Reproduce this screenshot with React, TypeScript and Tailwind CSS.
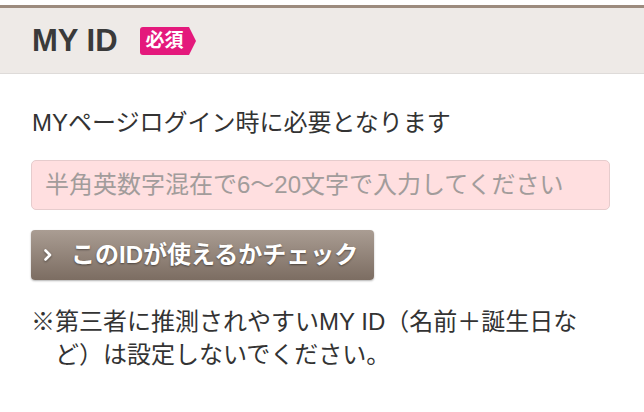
import * as React from "react";

const font = "font-['Liberation_Sans','Noto_Sans_CJK_JP',sans-serif]";

function RequiredBadge() {
  return (
    <span className="ml-[22px] flex items-center">
      <span className="flex h-[28px] items-center rounded-l-[3px] bg-[#e4197c] pl-[6px] pr-[5px] text-[19px] font-bold leading-none text-white">
        必須
      </span>
      <span className="h-0 w-0 border-y-[14px] border-l-[7px] border-y-transparent border-l-[#e4197c]" />
    </span>
  );
}

export default function App() {
  return (
    <div className={`min-h-[412px] w-full bg-white pt-[5px] text-[#333] ${font}`}>
      {/* section header */}
      <div className="flex h-[69px] items-center border-t-[3px] border-b border-t-[#9c8b7e] border-b-[#dedbd9] bg-[#eeeae7] pl-[32px]">
        <h2 className="text-[31px] font-bold leading-none text-[#3a3a3a]">MY ID</h2>
        <RequiredBadge />
      </div>

      <div className="px-[31px] pt-[32px]">
        <p className="pl-px text-[24px] leading-[34px]">MYページログイン時に必要となります</p>

        <input
          type="text"
          placeholder="半角英数字混在で6〜20文字で入力してください"
          className={`mt-[20px] block h-[50px] w-[579px] rounded-[5px] border border-[#e6cccd] bg-[#ffdfe0] px-[13px] text-[24px] text-[#333] outline-none placeholder:text-[#a29c9b] ${font}`}
        />

        <button
          type="button"
          className={`mt-[20px] flex h-[50px] w-[343px] items-center rounded-[4px] bg-gradient-to-b from-[#aa9d93] to-[#7c6d62] pl-[12px] text-[24px] font-bold text-white shadow-[0_1px_2px_rgba(0,0,0,0.3)] [text-shadow:0_1px_2px_rgba(0,0,0,0.45)] ${font}`}
        >
          <svg width="10" height="16" viewBox="0 0 10 16" className="mr-[18px] drop-shadow-[0_1px_1px_rgba(0,0,0,0.4)]">
            <path d="M2.5 3.5 L7 8 L2.5 12.5" fill="none" stroke="white" strokeWidth="2.6" strokeLinecap="round" strokeLinejoin="round" />
          </svg>
          このIDが使えるかチェック
        </button>

        <p className="mt-[25px] pl-[1em] -indent-[1em] text-[24px] leading-[33px]">
          ※第三者に推測されやすいMY ID（名前＋誕生日など）は設定しないでください。
        </p>
      </div>
    </div>
  );
}
